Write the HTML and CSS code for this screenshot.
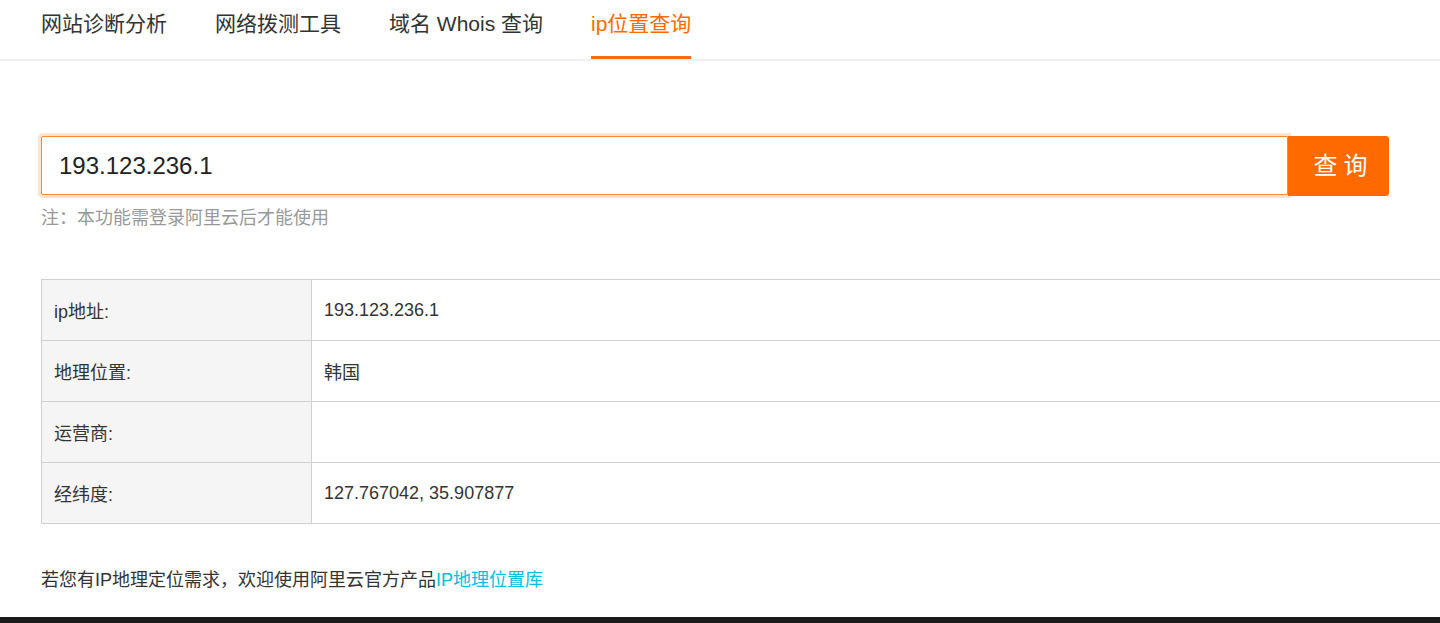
FILE: index.html
```html
<!DOCTYPE html>
<html lang="zh-CN">
<head>
<meta charset="utf-8">
<title>ip位置查询</title>
<link rel="stylesheet" href="styles.css">
</head>
<body>
<div class="page">
  <nav class="tabs">
    <a class="tab">网站诊断分析</a>
    <a class="tab">网络拨测工具</a>
    <a class="tab">域名 Whois 查询</a>
    <a class="tab active">ip位置查询</a>
  </nav>
  <main class="content">
    <div class="search">
      <div class="search-input">193.123.236.1</div>
      <button class="search-btn">查询</button>
    </div>
    <p class="note">注：本功能需登录阿里云后才能使用</p>
    <table class="result">
      <tr><th>ip地址:</th><td>193.123.236.1</td></tr>
      <tr><th>地理位置:</th><td>韩国</td></tr>
      <tr><th>运营商:</th><td></td></tr>
      <tr><th>经纬度:</th><td>127.767042, 35.907877</td></tr>
    </table>
    <p class="promo">若您有IP地理定位需求，欢迎使用阿里云官方产品<a class="promo-link">IP地理位置库</a></p>
  </main>
  <footer class="footer"></footer>
</div>
</body>
</html>
```
FILE: styles.css
```css
* { box-sizing: border-box; }
html, body { margin: 0; padding: 0; }
body {
  font-family: "Liberation Sans", Arial, "Noto Sans CJK SC", sans-serif;
  color: #333;
  background: #fff;
  overflow: hidden;
  height: 623px;
}
.page { width: 1440px; }
.tabs {
  display: flex;
  gap: 48px;
  padding: 0 0 0 41px;
  height: 61px;
  border-bottom: 2px solid #f0f0f0;
}
.tab {
  display: block;
  font-size: 21px;
  line-height: 24px;
  padding-top: 12px;
  height: 59px;
  color: #333;
  border-bottom: 3px solid transparent;
}
.tab.active {
  color: #ff6a00;
  border-bottom-color: #ff6a00;
}
.content { padding: 75px 0 0 41px; }
.search { display: flex; width: 1348px; }
.search-input {
  flex: 1;
  height: 59px;
  border: 1px solid #ff8a2a;
  border-radius: 2px 0 0 2px;
  box-shadow: 0 0 0 3px rgba(255, 106, 0, 0.18);
  font-size: 24px;
  line-height: 57px;
  padding-left: 17px;
  color: #222;
}
.search-btn {
  width: 101px;
  height: 60px;
  border: none;
  background: #ff6a00;
  color: #fff;
  font-family: "Noto Sans CJK SC", sans-serif;
  font-size: 24px;
  line-height: 28px;
  letter-spacing: 6px;
  padding: 0 0 4px 10px;
  border-radius: 0 3px 3px 0;
}
.note {
  margin: 10px 0 0;
  font-size: 18px;
  line-height: 24px;
  color: #999;
}
.result {
  margin-top: 49px;
  border-collapse: collapse;
  width: 1460px;
  font-size: 18px;
}
.result th, .result td {
  border: 1px solid #d0d0d0;
  height: 61px;
  padding: 0 12px;
  text-align: left;
  font-weight: normal;
  color: #333;
}
.result th { width: 270px; background: #f5f5f5; }
.promo {
  margin: 44px 0 0;
  font-size: 18px;
  line-height: 24px;
  color: #333;
}
.promo-link { color: #00c1de; }
.footer {
  margin-top: 25px;
  height: 7px;
  background: #1b1b1b;
}
```
